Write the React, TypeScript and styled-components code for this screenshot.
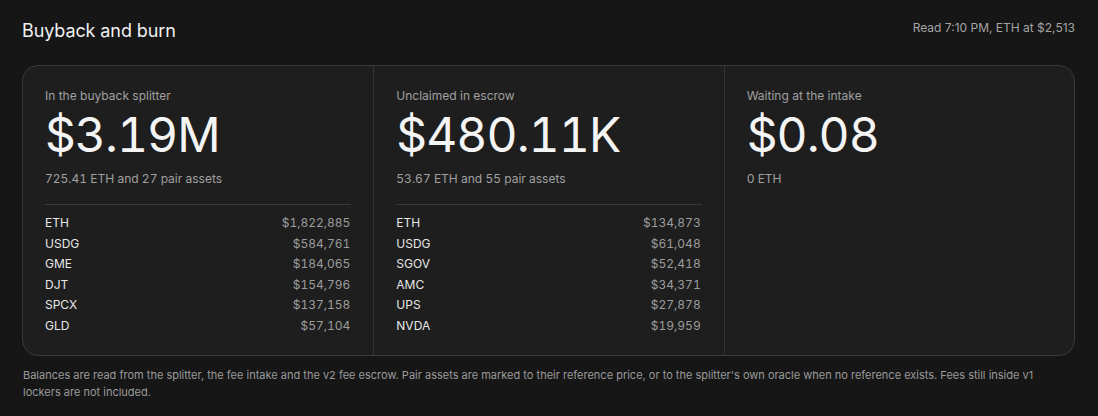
import * as React from "react";
import styled, { createGlobalStyle } from "styled-components";

const GlobalStyle = createGlobalStyle`
  html, body {
    margin: 0;
    padding: 0;
    background: #161616;
  }
  body {
    font-family: Inter, "Noto Sans", "Liberation Sans", sans-serif;
    color: #ececec;
    -webkit-font-smoothing: antialiased;
  }
`;

const Page = styled.main`
  padding: 20px 23px 0 22px;
  width: 1098px;
  box-sizing: border-box;
`;

const Header = styled.header`
  display: flex;
  justify-content: space-between;
  align-items: flex-start;
  height: 25px;
`;

const Title = styled.h1`
  margin: 0;
  font-size: 18px;
  line-height: 22px;
  font-weight: 400;
  color: #f0f0f0;
  letter-spacing: -0.1px;
`;

const Meta = styled.span`
  font-size: 12px;
  line-height: 16px;
  color: #a3a3a3;
`;

const Card = styled.section`
  margin-top: 20px;
  display: grid;
  grid-template-columns: repeat(3, 1fr);
  height: 291px;
  box-sizing: border-box;
  border: 1px solid #3a3a3a;
  border-radius: 16px;
  background: #1e1e1e;
  overflow: hidden;
`;

const Column = styled.div`
  padding: 22px 22px 0 22px;
  & + & {
    border-left: 1px solid #343434;
  }
`;

const Label = styled.div`
  font-size: 12px;
  line-height: 16px;
  color: #a0a0a0;
`;

const Big = styled.div`
  margin-top: 3px;
  font-size: 48px;
  line-height: 56px;
  letter-spacing: -0.02em;
  color: #f4f4f4;
  font-variant-numeric: tabular-nums;
`;

const Sub = styled.div`
  margin-top: 8px;
  font-size: 12px;
  line-height: 16px;
  color: #a0a0a0;
  font-variant-numeric: tabular-nums;
`;

const List = styled.ul`
  list-style: none;
  margin: 17px 0 0;
  padding: 8px 0 0;
  border-top: 1px solid #3a3a3a;
`;

const Row = styled.li`
  display: flex;
  justify-content: space-between;
  font-size: 12px;
  line-height: 20.6px;
`;

const Asset = styled.span`
  color: #e6e6e6;
`;

const Amount = styled.span`
  color: #9c9c9c;
  padding-right: 1px;
  font-variant-numeric: tabular-nums;
`;

const Note = styled.p`
  margin: 11px 0 0 1px;
  max-width: 1030px;
  font-size: 11px;
  line-height: 17px;
  color: #9a9a9a;
`;

type Holding = [string, string];

type Bucket = {
  label: string;
  value: string;
  sub: string;
  holdings: Holding[];
};

const buckets: Bucket[] = [
  {
    label: "In the buyback splitter",
    value: "$3.19M",
    sub: "725.41 ETH and 27 pair assets",
    holdings: [
      ["ETH", "$1,822,885"],
      ["USDG", "$584,761"],
      ["GME", "$184,065"],
      ["DJT", "$154,796"],
      ["SPCX", "$137,158"],
      ["GLD", "$57,104"],
    ],
  },
  {
    label: "Unclaimed in escrow",
    value: "$480.11K",
    sub: "53.67 ETH and 55 pair assets",
    holdings: [
      ["ETH", "$134,873"],
      ["USDG", "$61,048"],
      ["SGOV", "$52,418"],
      ["AMC", "$34,371"],
      ["UPS", "$27,878"],
      ["NVDA", "$19,959"],
    ],
  },
  {
    label: "Waiting at the intake",
    value: "$0.08",
    sub: "0 ETH",
    holdings: [],
  },
];

const App: React.FC = () => (
  <>
    <GlobalStyle />
    <Page>
      <Header>
        <Title>Buyback and burn</Title>
        <Meta>Read 7:10 PM, ETH at $2,513</Meta>
      </Header>
      <Card>
        {buckets.map((b) => (
          <Column key={b.label}>
            <Label>{b.label}</Label>
            <Big>{b.value}</Big>
            <Sub>{b.sub}</Sub>
            {b.holdings.length > 0 && (
              <List>
                {b.holdings.map(([name, amt]) => (
                  <Row key={name}>
                    <Asset>{name}</Asset>
                    <Amount>{amt}</Amount>
                  </Row>
                ))}
              </List>
            )}
          </Column>
        ))}
      </Card>
      <Note>
        Balances are read from the splitter, the fee intake and the v2 fee
        escrow. Pair assets are marked to their reference price, or to the
        splitter's own oracle when no reference exists. Fees still inside v1
        lockers are not included.
      </Note>
    </Page>
  </>
);

export default App;
